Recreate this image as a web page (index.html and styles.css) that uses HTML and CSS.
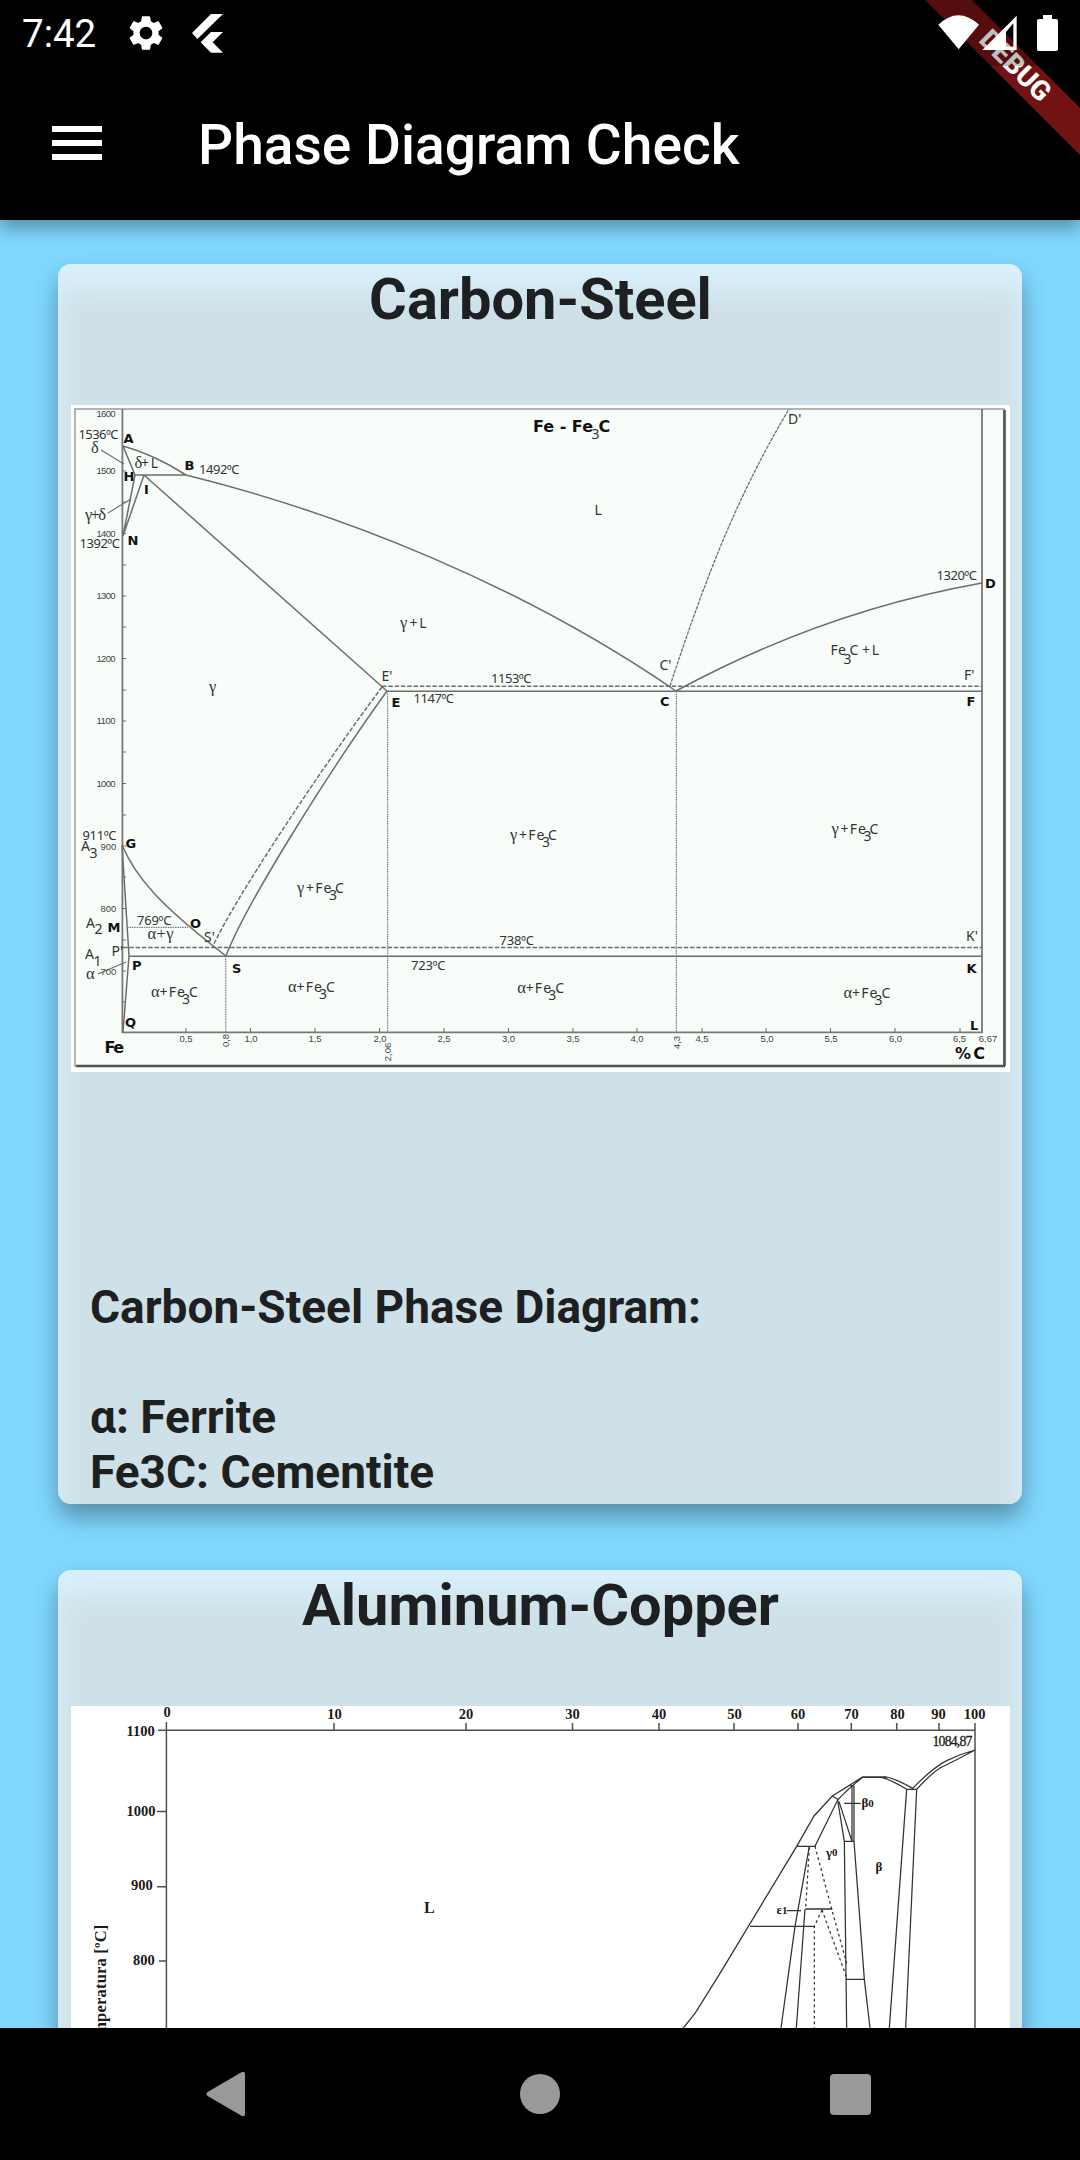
FILE: index.html
```html
<!DOCTYPE html>
<html lang="en">
<head>
<meta charset="utf-8">
<title>Phase Diagram Check</title>
<link rel="stylesheet" href="styles.css">
</head>
<body>
<div class="screen">
  <header class="app-bar">
    <div class="status">
      <span class="time">7:42</span>
      <svg class="gear" viewBox="0 0 24 24"><path d="M19.14 12.94c.04-.3.06-.61.06-.94 0-.32-.02-.64-.07-.94l2.03-1.58c.18-.14.23-.41.12-.61l-1.92-3.32c-.12-.22-.37-.29-.59-.22l-2.39.96c-.5-.38-1.03-.7-1.62-.94L14.4 2.81c-.04-.24-.24-.41-.48-.41h-3.84c-.24 0-.43.17-.47.41l-.36 2.54c-.59.24-1.13.57-1.62.94l-2.39-.96c-.22-.08-.47 0-.59.22L2.74 8.87c-.12.21-.08.47.12.61l2.03 1.58c-.05.3-.09.63-.09.94s.02.64.07.94l-2.03 1.58c-.18.14-.23.41-.12.61l1.92 3.32c.12.22.37.29.59.22l2.39-.96c.5.38 1.03.7 1.62.94l.36 2.54c.05.24.24.41.48.41h3.84c.24 0 .44-.17.47-.41l.36-2.54c.59-.24 1.13-.56 1.62-.94l2.39.96c.22.08.47 0 .59-.22l1.92-3.32c.12-.22.07-.47-.12-.61l-2.01-1.58zM12 15.6c-1.98 0-3.6-1.62-3.6-3.6s1.62-3.6 3.6-3.6 3.6 1.62 3.6 3.6-1.62 3.6-3.6 3.6z"/></svg>
      <svg class="flutter" viewBox="576 42 93 117"><path d="M633 42h36l-77 75-16-18zM633 96h36l-31 31 31 31h-36l-31-31z"/></svg>
    </div>
    <div class="toolbar">
      <svg class="menu" viewBox="0 0 50 34"><path d="M0 0h50v6H0zM0 14h50v6H0zM0 28h50v6H0z"/></svg>
      <h1 class="app-title">Phase Diagram Check</h1>
    </div>
  </header>

  <main class="list">
    <section class="card">
      <h2 class="card-title">Carbon-Steel</h2>
      <svg class="diagram steel" viewBox="71 405 939 667">
        <rect class="paper" x="71" y="405" width="939" height="667"/>
        <rect class="frame" x="75" y="409" width="929" height="657"/>
        <path class="frame-dark" d="M1004.5 410V1066M76 1066H1005"/>
        <g class="lines">
          <path class="axis" d="M122.4 409V1032.3H982V409"/>
          <path class="thin" d="M122 471h4M122 502h4M122 533.5h4M122 565h4M122 596h4M122 627h4M122 658.500h4M122 690h4M122 721h4M122 752h4M122 783.500h4M122 815h4M122 846h4M122 877h4M122 908.500h4M122 940h4M122 971h4M122 1002h4"/>
          <path class="thin" d="M186 1028v4M250.500 1028v4M315 1028v4M379.500 1028v4M444 1028v4M508.500 1028v4M573 1028v4M637 1028v4M702 1028v4M766 1028v4M830.500 1028v4M895 1028v4M960 1028v4"/>
          <path d="M123 446C148 453 166 462 186 475H135L123 446M135 475L123 536L144 475M144 475L387 691M186 475C340 513 520 584 676 691C770 640 870 603 982 583"/>
          <path d="M387 691.300H982M129 956.300H982M387 691C330 770 245 905 226 956"/>
          <path d="M122 845C136 878 160 905 226 956M122 845L129 956L123 1032"/>
          <path class="thin" d="M101 450L124 464M108 513L131 499M98 974L126 962"/>
          <path class="dash" d="M382 686.200H982M123 947.500H982M382 687C320 770 234 900 213 946"/>
          <path class="dash fine" d="M670 686C705 580 735 500 789 409"/>
          <path class="dots" d="M127 927.300H188M225.700 956V1032M387.600 691V1032M676.400 691V1032"/>
        </g>
        <g class="num">
          <text x="96.500" y="417" textLength="19">1600</text><text x="96.500" y="474" textLength="19">1500</text><text x="96.500" y="536.500" textLength="19">1400</text><text x="96.500" y="599" textLength="19">1300</text><text x="96.500" y="661.500" textLength="19">1200</text><text x="96.500" y="724" textLength="19">1100</text><text x="96.500" y="786.500" textLength="19">1000</text>
          <text x="100.500" y="849.500">900</text><text x="100.500" y="912">800</text><text x="100.500" y="974.500">700</text>
          <g class="mid">
            <text x="186" y="1041.500">0,5</text><text x="251" y="1041.500">1,0</text><text x="315" y="1041.500">1,5</text><text x="380" y="1041.500">2,0</text><text x="444" y="1041.500">2,5</text><text x="508.500" y="1041.500">3,0</text><text x="573" y="1041.500">3,5</text><text x="637" y="1041.500">4,0</text><text x="702" y="1041.500">4,5</text><text x="767" y="1041.500">5,0</text><text x="831" y="1041.500">5,5</text><text x="895.500" y="1041.500">6,0</text><text x="959.500" y="1041.500">6,5</text><text x="988" y="1041.500">6,67</text>
            <text transform="translate(229 1040.500) rotate(-90)">0,8</text><text transform="translate(391 1052) rotate(-90)">2,06</text><text transform="translate(680 1042.500) rotate(-90)">4,3</text>
          </g>
        </g>
        <g class="lab">
          <text x="78.500" y="439" textLength="40">1536ºC</text><text x="199" y="473.700" textLength="40.500">1492ºC</text><text x="79.500" y="547.700" textLength="40.500">1392ºC</text>
          <text x="82.500" y="840" textLength="34">911ºC</text><text x="137" y="925" textLength="34.500">769ºC</text>
          <text x="491" y="683" textLength="40.500">1153ºC</text><text x="413.500" y="702.500" textLength="40.500">1147ºC</text><text x="936.500" y="580" textLength="40.500">1320ºC</text>
          <text x="499.500" y="945" textLength="34.500">738ºC</text><text x="411" y="969.500" textLength="34.500">723ºC</text>
        </g>
        <g class="lab wide">
          <text x="81" y="851">A</text><text x="89.500" y="858">3</text><text x="86" y="927.500">A</text><text x="94.500" y="934">2</text><text x="85" y="959">A</text><text x="93.500" y="965.500">1</text>
          <text x="111.500" y="956">P'</text><text x="204" y="941.500">S'</text><text x="381.500" y="680.700">E'</text><text x="659.500" y="670">C'</text><text x="788" y="424">D'</text><text x="964" y="680">F'</text><text x="966" y="941">K'</text><text x="594.500" y="515">L</text>
          <text class="greek" x="91" y="453">δ</text><text class="greek" x="85" y="520" textLength="21">γ+δ</text><text class="greek" x="86" y="979">α</text><text class="greek" x="147.500" y="939" textLength="26">α+γ</text><text class="greek" x="209" y="692">γ</text>
          <text class="greek" x="134.500" y="468">δ</text><text x="141" y="468" textLength="17">+L</text>
          <text class="greek" x="400" y="628">γ</text><text x="409.500" y="628" textLength="17">+L</text>
          <g transform="translate(151 996.700)"><text class="greek">α</text><text x="8.500" textLength="25.500">+Fe</text><text x="31" y="7">3</text><text x="38">C</text></g>
          <g transform="translate(288 992)"><text class="greek">α</text><text x="8.500" textLength="25.500">+Fe</text><text x="31" y="7">3</text><text x="38">C</text></g>
          <g transform="translate(517.200 992.500)"><text class="greek">α</text><text x="8.500" textLength="25.500">+Fe</text><text x="31" y="7">3</text><text x="38">C</text></g>
          <g transform="translate(843.500 998)"><text class="greek">α</text><text x="8.500" textLength="25.500">+Fe</text><text x="31" y="7">3</text><text x="38">C</text></g>
          <g transform="translate(297 893)"><text class="greek">γ</text><text x="9" textLength="25.500">+Fe</text><text x="32" y="7">3</text><text x="38">C</text></g>
          <g transform="translate(510 840)"><text class="greek">γ</text><text x="9" textLength="25.500">+Fe</text><text x="32" y="7">3</text><text x="38">C</text></g>
          <g transform="translate(831.500 834)"><text class="greek">γ</text><text x="9" textLength="25.500">+Fe</text><text x="32" y="7">3</text><text x="38">C</text></g>
          <g transform="translate(830.500 655)"><text textLength="15.500">Fe</text><text x="13" y="8.500">3</text><text x="19">C</text><text x="31.500" textLength="17">+L</text></g>
        </g>
        <g class="pt">
          <text x="123.500" y="443">A</text><text x="184.500" y="469.700">B</text><text x="123.500" y="480.500">H</text><text x="144" y="493.500">I</text><text x="127.500" y="544.500">N</text>
          <text x="125.500" y="848">G</text><text x="107.500" y="932">M</text><text x="190" y="927.500">O</text><text x="132" y="969.500">P</text><text x="232" y="973">S</text><text x="125" y="1026.700">Q</text>
          <text x="391.500" y="706.700">E</text><text x="660" y="706">C</text><text x="985" y="588">D</text><text x="966.500" y="706">F</text><text x="966.500" y="973">K</text><text x="970" y="1030">L</text>
          <g class="big"><text x="104.500" y="1052.700" textLength="19.500">Fe</text><text x="955" y="1059" textLength="30">%C</text><text x="533" y="432" textLength="60">Fe - Fe</text><text x="598.500" y="432">C</text></g>
        </g>
        <text class="lab wide" x="591.500" y="438.500">3</text>
      </svg>
      <p class="notes">Carbon-Steel Phase Diagram:<br><br>α: Ferrite<br>Fe3C: Cementite</p>
    </section>

    <section class="card">
      <h2 class="card-title">Aluminum-Copper</h2>
      <svg class="diagram copper" viewBox="71 1706 939 667">
        <rect class="white" x="71" y="1706" width="939" height="667"/>
        <g class="ink">
          <path d="M158 1730.300H975M166.400 1722V2373M975 1723V2373M157 1811.400h9M157 1886.800h9M159 1961h7"/>
          <path d="M334 1723v7M466 1723v7M572.500 1723v7M659 1723v7M734 1723v7M798 1723v7M851.300 1723v7M896.700 1723v7M939 1723v7"/>
        </g>
        <g class="ink curves" transform="translate(640 1680) scale(.33333)">
          <path d="M100 1082L130 1044L165 1000L240 880L470 499L522 408L577 348L668 291H740Q775 300 818 325Q880 262 920 242Q960 222 1005 210Q950 240 900 264Q870 284 830 328H800Q755 300 725 292H668Q625 325 593 360L525 499M577 348L593 358"/>
          <path d="M470 499H527M593 360L613 484L620 1044M597 365L636 484M613 484H642M630 317H642M636 317V484M642 317V484L673 898L690 1044M620 898H673"/>
          <path d="M508 499L465 739L423 1044M495 687L469 1044M330 739H523M497 687H577M800 328L748 1044M830 328L797 1044M440 692H483M613 370H662"/>
          <path class="broken" d="M525 499L575 687L620 850M546 690L620 892M508 502L497 687M546 690L523 739V1044"/>
        </g>
        <g class="serif">
          <g class="mid"><text x="167" y="1717">0</text><text x="334.500" y="1718.500">10</text><text x="466" y="1718.500">20</text><text x="572.500" y="1718.500">30</text><text x="659" y="1718.500">40</text><text x="734.500" y="1718.500">50</text><text x="798" y="1718.500">60</text><text x="851.500" y="1718.500">70</text><text x="897.500" y="1718.500">80</text><text x="938.500" y="1718.500">90</text><text x="974.500" y="1718.500">100</text></g>
          <text x="126.500" y="1736">1100</text><text x="126.500" y="1816">1000</text><text x="131" y="1890">900</text><text x="133" y="1964.500">800</text>
          <text class="phase" x="424" y="1912.500">L</text>
          <text x="932.500" y="1746" textLength="40" class="temp light">1084,87</text>
          <text class="temp" x="861.500" y="1807">β<tspan class="sub">0</tspan></text><text class="temp" x="826" y="1857">γ<tspan class="sub" dy="-1">0</tspan></text><text class="temp" x="875.500" y="1870.500">β</text><text class="temp" x="776.500" y="1914">ε<tspan class="sub">1</tspan></text>
          <text class="side" transform="translate(106 1924.500) rotate(-90)">Temperatura [ºC]</text>
        </g>
      </svg>
    </section>
  </main>

  <nav class="nav">
    <svg viewBox="0 0 44 48"><path d="M4.500 21.500L37 2.500Q41 .5 41 4V44Q41 47.500 37 45.500L4.500 26.500Q0 24 4.500 21.500Z"/></svg>
    <svg viewBox="0 0 44 48"><circle cx="23" cy="24" r="20"/></svg>
    <svg viewBox="0 0 44 48"><rect x="1" y="4" width="41" height="41" rx="4"/></svg>
  </nav>

  <svg class="overlay" viewBox="0 0 280 240">
    <path class="ribbon" d="M125 0H172L280 108V155Z"/>
    <text class="debug" transform="translate(215.500 65.500) rotate(45)" y="9.500" textLength="88">DEBUG</text>
    <rect class="shade" width="280" height="66"/>
    <g transform="scale(.33333)">
      <path d="M415 74Q475 17 537 74L476 148Z"/>
      <path fill-rule="evenodd" d="M547 150L650 47V150ZM618 96V140H640V70Z"/>
      <path d="M729 45h27v12h12q6 0 6 6v84q0 6-6 6h-51q-6 0-6-6V63q0-6 6-6h12z"/>
    </g>
  </svg>
</div>
</body>
</html>
```

FILE: styles.css
```css
* { box-sizing: border-box; }
body { margin: 0; font-family: Roboto, sans-serif; }
.screen {
  position: relative;
  width: 1080px;
  height: 2160px;
  overflow: hidden;
  display: flex;
  flex-direction: column;
  background: #80d8ff;
}
.app-bar {
  flex: none;
  height: 220px;
  background: #000;
  color: #fff;
  fill: #fff;
  box-shadow: 0 9px 16px rgba(0, 0, 0, .32);
  z-index: 1;
}
.status { display: flex; align-items: center; height: 66px; padding-left: 22px; }
.time { width: 103px; font-size: 38.5px; line-height: 66px; padding-top: 2px; }
.gear { width: 42px; height: 42px; }
.flutter { width: 31px; height: 39px; margin-left: 25px; }
.toolbar { display: flex; align-items: center; height: 154px; padding-left: 52px; }
.menu { width: 50px; height: 34px; }
.app-title { margin: 3px 0 0 96px; font-size: 55.1px; font-weight: 500; line-height: 64px; white-space: nowrap; }

.list {
  flex: 1;
  min-height: 0;
  overflow: hidden;
  display: flex;
  flex-direction: column;
  gap: 66px;
  padding: 44px 58px 0;
}
.card {
  flex: none;
  display: flex;
  flex-direction: column;
  height: 1240px;
  padding: 1px 12px 4px 13px;
  border-radius: 13px;
  background: #cfe1e8;
  color: #1d1f20;
  box-shadow: 0 13px 24px rgba(0, 0, 0, .34), inset 0 24px 26px #d9f0fd;
}
.card-title {
  margin: 0;
  font-size: 57.75px;
  font-weight: 700;
  line-height: 68px;
  text-align: center;
}
.diagram { display: block; flex: none; width: 939px; height: 667px; }
.steel { margin-top: 72px; }
.copper { margin-top: 67px; }
.notes { margin: auto 0 0 19px; font-size: 46px; font-weight: 700; line-height: 55px; }

.paper { fill: #f9fdf9; stroke: #fff; stroke-width: 3; }
.frame { fill: none; stroke: #aaada9; stroke-width: 1.8; }
.frame-dark { fill: none; stroke: #50534f; stroke-width: 2.6; }
.lines { fill: none; stroke: #6c6e6c; stroke-width: 1.5; }
.axis { stroke: #777977; stroke-width: 1.8; }
.thin { stroke-width: 1.1; }
.dash { stroke-dasharray: 4.5 1.8; }
.fine { stroke-dasharray: 3.5 1; stroke-width: 1.3; }
.dots { stroke-width: 1.2; stroke-dasharray: 1.6 .8; stroke: #808280; }
.num { font: 9.5px "Liberation Sans", sans-serif; fill: #444; }
.mid { text-anchor: middle; }
.lab { font: 13px "Noto Sans", sans-serif; fill: #333; }
.wide { font-size: 14px; }
.greek { font: 16.5px "Liberation Serif", serif; }
.pt { font: bold 13px "DejaVu Sans", sans-serif; fill: #111; }
.big { font-size: 16px; }

.white { fill: #fff; }
.ink { fill: none; stroke: #505050; stroke-width: 1.5; }
.curves { stroke: #333; stroke-width: 3.8; }
.broken { stroke-dasharray: 8 9; }
.serif { font: bold 14.5px "Liberation Serif", serif; fill: #1a1a1a; }
.phase { font-size: 16px; }
.temp { font-size: 13px; }
.light { font-size: 13.8px; font-weight: 400; stroke: #1a1a1a; stroke-width: .3; }
.sub { font-size: 11px; }
.side { font-size: 16.5px; letter-spacing: .2px; text-anchor: end; }

.nav {
  flex: none;
  display: flex;
  justify-content: space-between;
  align-items: center;
  height: 132px;
  padding: 0 207px 0 204px;
  background: #000;
  fill: #999;
  z-index: 1;
}
.nav svg { width: 44px; height: 48px; }

.overlay { position: absolute; top: 0; right: 0; width: 280px; height: 240px; fill: #fff; z-index: 2; }
.ribbon { fill: #731212; }
.debug { font: 800 27.5px Roboto, sans-serif; text-anchor: middle; }
.shade { fill: rgba(0, 0, 0, .25); }
```
